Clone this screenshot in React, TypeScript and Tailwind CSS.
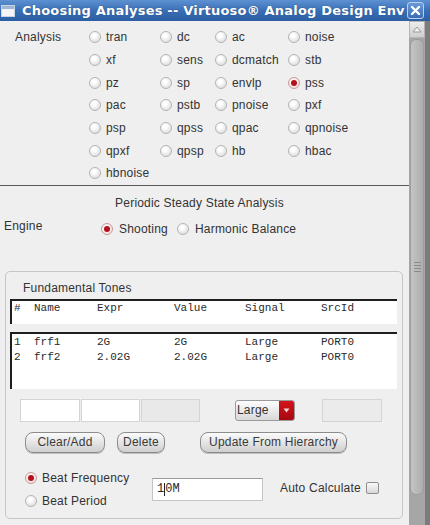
import React from "react";

function Radio({ checked }: { checked?: boolean }) {
  return (
    <span
      className={
        checked
          ? "w-[12px] h-[12px] rounded-full border border-[#c79a9a] bg-[radial-gradient(circle_at_40%_35%,#ffffff,#f1d6d6)] flex items-center justify-center shrink-0"
          : "w-[12px] h-[12px] rounded-full border border-[#b4b4b4] bg-[radial-gradient(circle_at_40%_35%,#ffffff_20%,#d2d2d2)] flex items-center justify-center shrink-0"
      }
    >
      {checked && <span className="w-[6px] h-[6px] rounded-full bg-[#b3121c]" />}
    </span>
  );
}

const rows: string[][] = [
  ["tran", "dc", "ac", "noise"],
  ["xf", "sens", "dcmatch", "stb"],
  ["pz", "sp", "envlp", "pss"],
  ["pac", "pstb", "pnoise", "pxf"],
  ["psp", "qpss", "qpac", "qpnoise"],
  ["qpxf", "qpsp", "hb", "hbac"],
  ["hbnoise"],
];

function Btn({ w, children }: { w: string; children: React.ReactNode }) {
  return (
    <div
      className={`${w} h-[21px] rounded-[8px] border border-[#8c8c8c] bg-gradient-to-b from-[#fbfbfb] to-[#cfcfcf] flex items-center justify-center text-[#3a3a3a] shadow-[0_1px_0_#bdbdbd]`}
    >
      {children}
    </div>
  );
}

export default function App() {
  return (
    <div className="w-[430px] h-[525px] bg-[#efefef] flex flex-col overflow-hidden font-['Liberation_Sans',Arial,sans-serif] text-[12px] tracking-[0.2px] text-[#333]">
      {/* Title bar */}
      <div className="h-[21px] shrink-0 flex items-center bg-gradient-to-b from-[#5d91d2] via-[#3a6fb5] to-[#2c5ea3]">
        <div className="ml-[1px] w-[14px] h-[12px] bg-[#f4f4f4] border border-[#c8d4e4] flex flex-col shrink-0">
          <div className="h-[3px] bg-[#9fb6d6]" />
        </div>
        <div className="ml-[7px] flex-1 min-w-0 whitespace-nowrap text-white font-bold text-[13px] tracking-[0.2px] font-['DejaVu_Sans',sans-serif] leading-[21px] [text-shadow:0_0_1px_#1c3f70]">
          Choosing Analyses -- Virtuoso® Analog Design Env
        </div>
        <div className="ml-[2px] mr-[6px] w-[17px] h-[17px] rounded-[3px] border border-[#b9cfee] bg-gradient-to-b from-[#6a9bd8] to-[#3a6db2] flex items-center justify-center shrink-0">
          <svg width="11" height="11" viewBox="0 0 11 11">
            <path d="M2 2 L9 9 M9 2 L2 9" stroke="white" strokeWidth="2.4" strokeLinecap="round" />
          </svg>
        </div>
      </div>

      <div className="flex flex-1 min-h-0">
        {/* Content */}
        <div className="flex-1 min-w-0 flex flex-col">
          {/* Analysis section */}
          <div className="pt-[5px] flex border-b border-[#5a5a5a]">
            <div className="w-[89px] pl-[15px] h-[22.67px] flex items-center shrink-0">Analysis</div>
            <div className="grid grid-cols-[71px_55px_73px_100px] auto-rows-[22.67px]">
              {rows.flatMap((r, i) =>
                r.map((name, j) => (
                  <div key={`${i}-${j}`} className="flex items-center gap-[5px]">
                    <Radio checked={name === "pss"} />
                    <span>{name}</span>
                  </div>
                ))
              )}
            </div>
          </div>

          <div className="mt-[10px] leading-[14px] text-center pr-[10px]">Periodic Steady State Analysis</div>

          <div className="mt-[9px] flex items-start h-[17px]">
            <div className="w-[101px] pl-[4px] leading-[14px]">Engine</div>
            <div className="mt-[3px] flex items-center gap-[9px] leading-[14px]">
              <div className="flex items-center gap-[6px]">
                <Radio checked />
                <span>Shooting</span>
              </div>
              <div className="flex items-center gap-[6px]">
                <Radio />
                <span>Harmonic Balance</span>
              </div>
            </div>
          </div>

          {/* Fundamental tones group */}
          <div className="mt-[35px] ml-[5px] w-[398px] h-[248px] border border-[#c6c6c6] rounded-[5px] flex flex-col">
            <div className="pt-[9px] pl-[17px] leading-[14px]">Fundamental Tones</div>

            <div className="mt-[4px] ml-[4px] w-[387px] h-[25px] bg-white border-t-2 border-l-2 border-[#1e1e1e] font-['Liberation_Mono',monospace] text-[11px] tracking-normal text-[#2a2a2a] flex leading-[14px] pl-[2px]">
              <span className="w-[20px]">#</span>
              <span className="w-[63px]">Name</span>
              <span className="w-[77px]">Expr</span>
              <span className="w-[71px]">Value</span>
              <span className="w-[76px]">Signal</span>
              <span>SrcId</span>
            </div>

            <div className="mt-[8px] ml-[4px] w-[387px] h-[57px] bg-white border-t-2 border-l-2 border-[#1e1e1e] font-['Liberation_Mono',monospace] text-[11px] tracking-normal text-[#2a2a2a] flex flex-col leading-[15.5px] pl-[2px] pt-[1px]">
              {[
                ["1", "frf1", "2G", "2G", "Large", "PORT0"],
                ["2", "frf2", "2.02G", "2.02G", "Large", "PORT0"],
              ].map((r) => (
                <div key={r[0]} className="flex">
                  <span className="w-[20px]">{r[0]}</span>
                  <span className="w-[63px]">{r[1]}</span>
                  <span className="w-[77px]">{r[2]}</span>
                  <span className="w-[71px]">{r[3]}</span>
                  <span className="w-[76px]">{r[4]}</span>
                  <span>{r[5]}</span>
                </div>
              ))}
            </div>

            {/* input row */}
            <div className="mt-[10px] ml-[14px] flex items-center h-[23px]">
              <div className="w-[60px] h-[23px] bg-white border border-[#d4d4d4]" />
              <div className="ml-[1px] w-[59px] h-[23px] bg-white border border-[#d4d4d4]" />
              <div className="ml-[1px] w-[59px] h-[23px] bg-[#e9e9e9] border border-[#d4d4d4]" />
              <div className="ml-[35px] w-[60px] h-[21px] rounded-[3px] border border-[#9a9a9a] bg-gradient-to-b from-[#fdfdfd] to-[#d9d9d9] flex overflow-hidden">
                <span className="flex-1 pl-[1px] leading-[19px] text-[#333]">Large</span>
                <span className="w-[15px] bg-gradient-to-b from-[#d4141c] to-[#a80810] flex items-center justify-center">
                  <svg width="7" height="5" viewBox="0 0 7 5">
                    <path d="M0.5 0.5 L6.5 0.5 L3.5 4.5 Z" fill="#f6d8d8" />
                  </svg>
                </span>
              </div>
              <div className="ml-[27px] w-[60px] h-[23px] bg-[#ebebeb] border border-[#d4d4d4]" />
            </div>

            {/* buttons */}
            <div className="mt-[10px] ml-[19px] flex items-center">
              <Btn w="w-[80px]">Clear/Add</Btn>
              <div className="ml-[12px]">
                <Btn w="w-[48px]">Delete</Btn>
              </div>
              <div className="ml-[35px]">
                <Btn w="w-[147px]">Update From Hierarchy</Btn>
              </div>
            </div>

            {/* beat */}
            <div className="mt-[14px] ml-[19px] flex items-start">
              <div className="w-[127px] flex flex-col">
                <div className="h-[23px] flex items-center gap-[5px]">
                  <Radio checked />
                  <span>Beat Frequency</span>
                </div>
                <div className="h-[23px] flex items-center gap-[5px]">
                  <Radio />
                  <span>Beat Period</span>
                </div>
              </div>
              <div className="mt-[11px] w-[111px] h-[23px] bg-white border border-[#c4c4c4] border-t-[#9c9c9c] flex items-center pl-[4px] font-['Liberation_Mono',monospace] text-[12px] tracking-normal text-[#2a2a2a]">
                <span>1</span>
                <span className="w-[1px] h-[13px] bg-[#222]" />
                <span>0M</span>
              </div>
              <div className="mt-[14px] ml-[17px] flex items-center gap-[5px]">
                <span className="leading-[14px]">Auto Calculate</span>
                <span className="w-[13px] h-[12px] rounded-[2px] border border-[#8e8e8e] bg-gradient-to-b from-[#fafafa] to-[#d8d8d8]" />
              </div>
            </div>
          </div>
        </div>

        {/* Scrollbar */}
        <div className="w-[21px] shrink-0 flex">
          <div className="w-[16px] bg-[#a6a6a6] flex flex-col items-center">
            <div className="w-[16px] h-[17px] bg-gradient-to-b from-[#ececec] to-[#cfcfcf] border border-[#b5b5b5] flex items-center justify-center">
              <svg width="10" height="7" viewBox="0 0 10 7">
                <path d="M1 6 L5 1 L9 6 Z" fill="#f3f3f3" stroke="#9a9a9a" strokeWidth="1" />
              </svg>
            </div>
            <div className="mt-[1px] w-[14px] h-[456px] rounded-[6px] bg-gradient-to-r from-[#c4c4c4] via-[#b9b9b9] to-[#adadad] border border-[#9d9d9d] flex flex-col items-center justify-center gap-[2px]">
              <div className="w-[7px] h-[1px] bg-[#8a8a8a]" />
              <div className="w-[7px] h-[1px] bg-[#8a8a8a]" />
              <div className="w-[7px] h-[1px] bg-[#8a8a8a]" />
              <div className="w-[7px] h-[1px] bg-[#8a8a8a]" />
            </div>
          </div>
          <div className="w-[5px] bg-[#7c7c7c]" />
        </div>
      </div>
    </div>
  );
}
